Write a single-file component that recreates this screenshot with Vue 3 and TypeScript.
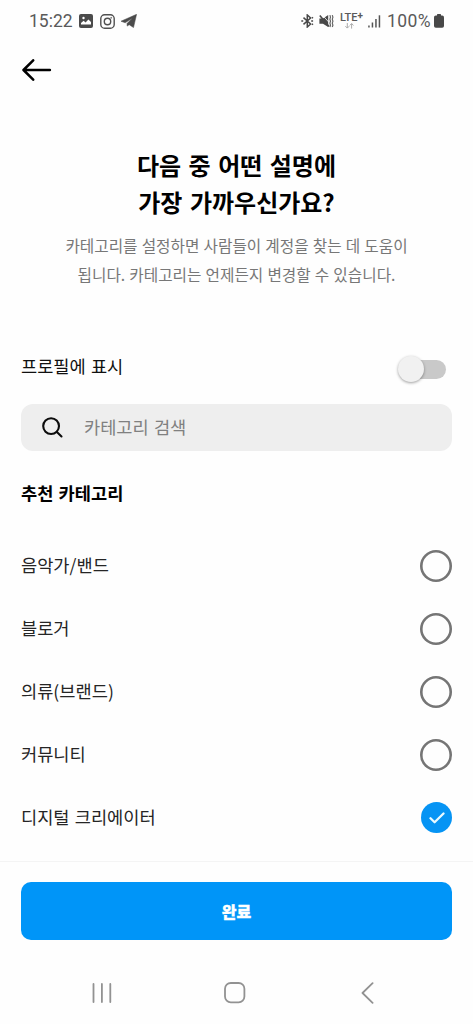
<script setup lang="ts">
import { ref } from 'vue'

interface Category {
  id: string
  label: string
}

const categories: Category[] = [
  { id: 'music', label: '음악가/밴드' },
  { id: 'blogger', label: '블로거' },
  { id: 'clothing', label: '의류(브랜드)' },
  { id: 'community', label: '커뮤니티' },
  { id: 'creator', label: '디지털 크리에이터' },
]

const selected = ref<string>('creator')
const showOnProfile = ref<boolean>(false)
const query = ref<string>('')
</script>

<template>
  <div class="screen">
    <div class="status">
      <div class="status-left">
        <span class="clock">15:22</span>
        <svg class="ic-photo" width="14" height="14" viewBox="0 0 14 14">
          <rect width="14" height="14" rx="2" fill="#4b4b4b" />
          <path d="M2 10.5V9L4.6 6.7 6.6 8.4 9.4 5.5 12 8V10.5Z" fill="#fff" />
          <circle cx="4.5" cy="4" r="1.2" fill="#fff" />
        </svg>
        <svg class="ic-camera" width="15" height="15" viewBox="0 0 15 15" fill="none" stroke="#505050" stroke-width="1.4">
          <rect x=".8" y=".8" width="13.4" height="13.4" rx="3.8" />
          <circle cx="7.5" cy="7.5" r="3.2" />
          <circle cx="11.2" cy="3.8" r=".5" fill="#505050" stroke-width=".5" />
        </svg>
        <svg class="ic-plane" width="16" height="14" viewBox="0 0 16 14">
          <path d="M15.6 .3 0 7.2 4.2 8.8 11.3 4.2 6 9.5 6.2 12.1 8.2 10.7 12.5 13.6Z" fill="#4b4b4b" stroke="#4b4b4b" stroke-width=".5" stroke-linejoin="round" />
        </svg>
      </div>
      <div class="status-right">
        <svg class="ic-bt" width="13" height="14" viewBox="0 0 13 14" fill="none" stroke="#484848" stroke-width="1.5">
          <path d="M2.5 3.6 9.6 10 6.3 13V1L9.6 4 2.5 10.4" />
          <path d="M.3 7h1.9M10.2 7h1.9M11 4.2l.9-.9M11 9.8l.9.9" stroke-width="1.6" />
        </svg>
        <svg class="ic-mute" width="15" height="14" viewBox="0 0 15 14">
          <path d="M.4 4.4H4L9.2 .9v12.2L4 9.8H.4Z" fill="#484848" />
          <path d="M3.2 .8 10.6 9" stroke="#fefefe" stroke-width=".8" />
          <path d="M.8 1.4 10 12.6" stroke="#484848" stroke-width="1.6" />
          <path d="M10.9 1.2l.6 2-.6 2 .6 2-.6 2 .6 2-.6 1.8M13.3 1.2l.6 2-.6 2 .6 2-.6 2 .6 2-.6 1.8" fill="none" stroke="#666" stroke-width="1.2" />
        </svg>
        <div class="network">
          <span class="lte">LTE<b>+</b></span>
          <svg class="arrows" width="9" height="6" viewBox="0 0 9 6" fill="none" stroke="#aaa" stroke-width="1">
            <path d="M2.3 0v5M.4 3.2l1.9 1.9 1.9-1.9M6.6 5.6V.6M4.8 2.4 6.6.6l1.9 1.8" />
          </svg>
        </div>
        <svg class="ic-signal" width="13" height="13" viewBox="0 0 13 13" fill="#555">
          <rect x=".2" y="10.5" width="1.5" height="2" />
          <rect x="3.7" y="7.5" width="1.5" height="5" />
          <rect x="7.2" y="4" width="1.5" height="8.5" />
          <rect x="10.7" y=".3" width="1.5" height="12.2" />
        </svg>
        <span class="percent">100%</span>
        <svg class="ic-battery" width="10" height="14" viewBox="0 0 10 14" fill="#484848">
          <rect x="0" y="1.5" width="10" height="12.3" rx="1.8" />
          <rect x="3" y="0" width="4" height="3" rx=".6" />
        </svg>
      </div>
    </div>

    <header class="topbar">
      <button class="plain" aria-label="뒤로">
        <svg width="30" height="22" viewBox="0 0 30 22" fill="none" stroke="#000" stroke-width="2.5" stroke-linecap="round" stroke-linejoin="round">
          <path d="M27.9 11H1.6M11.2 1.3 1.5 11l9.7 9.7" />
        </svg>
      </button>
    </header>

    <section class="intro">
      <h1>다음 중 어떤 설명에<br />가장 가까우신가요?</h1>
      <p>카테고리를 설정하면 사람들이 계정을 찾는 데 도움이<br />됩니다. 카테고리는 언제든지 변경할 수 있습니다.</p>
    </section>

    <main class="content">
      <div class="toggle-row">
        <span class="text">프로필에 표시</span>
        <button class="plain switch" :class="{ on: showOnProfile }" role="switch" :aria-checked="showOnProfile" @click="showOnProfile = !showOnProfile">
          <span class="knob"></span>
        </button>
      </div>

      <label class="search">
        <svg width="21" height="21" viewBox="0 0 21 21" fill="none" stroke="#0c0c0c" stroke-width="2.1" stroke-linecap="round">
          <circle cx="9.1" cy="9.1" r="7.9" />
          <path d="M14.9 14.9 19.5 19.4" />
        </svg>
        <input v-model="query" type="text" placeholder="카테고리 검색" />
      </label>

      <h2>추천 카테고리</h2>

      <ul class="list">
        <li v-for="item in categories" :key="item.id" @click="selected = item.id">
          <span class="text">{{ item.label }}</span>
          <span class="radio" :class="{ checked: selected === item.id }">
            <svg v-if="selected === item.id" width="16" height="12" viewBox="0 0 16 12" fill="none" stroke="#e9faff" stroke-width="2.3" stroke-linecap="round" stroke-linejoin="round">
              <path d="M1.5 6.3 5.6 10.3 14.5 1.5" />
            </svg>
          </span>
        </li>
      </ul>
    </main>

    <footer class="action">
      <button class="plain done">완료</button>
    </footer>

    <nav class="navbar">
      <svg width="20" height="20" viewBox="0 0 20 20" stroke="#929292" stroke-width="1.8" stroke-linecap="round">
        <path d="M1.5 1v18M9.9 1v18M18.3 1v18" />
      </svg>
      <svg width="22" height="22" viewBox="0 0 22 22" fill="none" stroke="#929292" stroke-width="1.8">
        <rect x="1" y="1" width="19.4" height="19.4" rx="5.8" />
      </svg>
      <svg width="13" height="22" viewBox="0 0 13 22" fill="none" stroke="#929292" stroke-width="1.8" stroke-linecap="round" stroke-linejoin="round">
        <path d="M11.6 1.2 1.5 11l10.1 9.8" />
      </svg>
    </nav>
  </div>
</template>

<style>
body {
  margin: 0;
  background: #fefefe;
}
</style>

<style scoped>
.screen {
  box-sizing: border-box;
  display: flex;
  flex-direction: column;
  width: 473px;
  height: 1024px;
  overflow: hidden;
  background: #fefefe;
  color: #101010;
  font-family: "Noto Sans CJK KR", sans-serif;
  font-size: 17.6px;
  word-spacing: 1.2px;
}
svg {
  display: block;
  flex: none;
}
.plain {
  padding: 0;
  border: 0;
  background: none;
  font: inherit;
}
.status {
  display: flex;
  flex: none;
  justify-content: space-between;
  height: 42px;
  padding: 0 29px;
  color: #5a5a5a;
  font-family: Roboto, sans-serif;
  font-size: 17.5px;
}
.status-left,
.status-right {
  display: flex;
  align-items: center;
}
.clock {
  width: 50px;
}
.ic-camera {
  margin-left: 7px;
}
.ic-plane {
  margin-left: 6px;
}
.ic-mute {
  margin-left: 5px;
}
.network {
  width: 26px;
  height: 19px;
  margin-left: 6px;
}
.lte {
  display: block;
  height: 11px;
  font-size: 11px;
  font-weight: 500;
  line-height: 11px;
  white-space: nowrap;
}
.lte b {
  font-size: 10px;
  vertical-align: 2px;
  line-height: 0;
}
.arrows {
  margin-left: 5px;
}
.ic-signal {
  margin-left: 2px;
}
.percent {
  width: 47px;
  margin-left: 6px;
  letter-spacing: 0.4px;
}
.topbar {
  display: flex;
  flex: none;
  align-items: center;
  height: 58px;
  padding-left: 22px;
}
.topbar button {
  margin-bottom: 2px;
}
.intro {
  flex: none;
  height: 242px;
  padding-top: 46px;
  box-sizing: border-box;
  text-align: center;
}
h1 {
  margin: 0;
  color: #000;
  font-size: 24px;
  font-weight: 700;
  line-height: 37px;
  word-spacing: 2px;
}
p {
  margin: 11px 0 0;
  color: #777;
  font-size: 15.7px;
  line-height: 29px;
  white-space: nowrap;
  word-spacing: 0.6px;
}
.content {
  flex: 1;
  padding: 0 21px;
}
.toggle-row {
  display: flex;
  align-items: center;
  justify-content: space-between;
  height: 50px;
}
.text {
  margin-bottom: 2px;
}
.toggle-row .text {
  margin-bottom: 4px;
}
.switch {
  display: flex;
  align-items: center;
  width: 44px;
  height: 19px;
  margin: 5px 6px 0 0;
  border-radius: 10px;
  background: #c9c9c9;
}
.switch.on {
  justify-content: flex-end;
  background: #8ccfff;
}
.knob {
  flex: none;
  width: 26px;
  height: 26px;
  margin: -1px 0 0 -4px;
  border-radius: 50%;
  background: #f1f1f1;
  box-shadow: 0 1px 3px rgba(0, 0, 0, 0.38);
}
.search {
  display: flex;
  align-items: center;
  box-sizing: border-box;
  height: 47px;
  margin-top: 12px;
  padding-left: 21px;
  border-radius: 12px;
  background: #eee;
}
.search input {
  flex: 1;
  min-width: 0;
  height: 30px;
  margin: 0 0 2px 21px;
  padding: 0;
  border: 0;
  outline: 0;
  background: none;
  color: #101010;
  font: inherit;
  word-spacing: inherit;
}
.search input::placeholder {
  color: #808080;
}
h2 {
  height: 83px;
  margin: 0;
  color: #000;
  font-size: 17.6px;
  font-weight: 700;
  line-height: 83px;
}
.list {
  margin: 0;
  padding: 0;
  list-style: none;
}
.list li {
  display: flex;
  align-items: center;
  justify-content: space-between;
  height: 63px;
  color: #252525;
}
.radio {
  display: flex;
  align-items: center;
  justify-content: center;
  width: 32px;
  height: 32px;
  border-radius: 50%;
  box-shadow: inset 0 0 0 2.6px #757575;
}
.radio.checked {
  width: 31px;
  height: 31px;
  box-shadow: none;
  background: #0694f4;
}
.action {
  flex: none;
  box-sizing: border-box;
  height: 101px;
  padding: 20px 21px 0;
  border-top: 1px solid #f4f4f4;
}
.done {
  width: 431px;
  height: 58px;
  border-radius: 10px;
  background: #0095f8;
  color: #fff;
  font-size: 16px;
  font-weight: 900;
  -webkit-text-stroke: 0.3px #fff;
}
.navbar {
  display: grid;
  flex: none;
  grid-template-columns: 133px 133px 133px;
  align-items: center;
  justify-items: center;
  height: 62px;
  padding-left: 35px;
}
</style>
